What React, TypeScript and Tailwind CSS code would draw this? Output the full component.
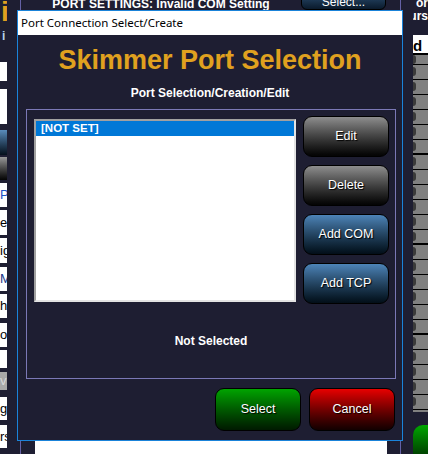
const leftItems = [
  { cls: 'mt-[14px] h-[19px] bg-white', text: '' },
  { cls: 'mt-[8px] h-[35px] bg-white', text: '' },
  { cls: 'mt-[6px] h-[25px] bg-linear-to-b from-[#5a8cbc] to-[#05101c]', text: '' },
  { cls: 'mt-[2px] h-[23px] bg-linear-to-b from-[#9a9a9a] to-[#050505]', text: '' },
  { cls: 'mt-[3px] h-[24px] bg-white', text: 'P', tone: 'text-[#1c52c4]', dot: true },
  { cls: 'mt-[3px] h-[25px] bg-white', text: 'er' },
  { cls: 'mt-[3px] h-[25px] bg-white', text: 'ig' },
  { cls: 'mt-[4px] h-[24px] bg-white', text: 'MP', tone: 'text-[#1a3a8a]' },
  { cls: 'mt-[3px] h-[24px] bg-white', text: 'h' },
  { cls: 'mt-[5px] h-[24px] bg-white', text: 'os' },
  { cls: 'mt-[3px] h-[18px] bg-white', text: '' },
  { cls: 'mt-[4px] h-[18px] bg-[#a9a9a9]', text: 'v', tone: 'text-[#d8d8d8]' },
  { cls: 'mt-[7px] h-[23px] bg-white', text: 'gs' },
  { cls: 'mt-[5px] h-[23px] bg-white', text: 'rs' },
];

const grid = [
  'h-[10px] border-b border-black',
  ...Array.from({ length: 24 }, (_, i) =>
    (i + 1) % 6 === 0 ? 'h-[15px] border-b-2 border-black' : 'h-[15px] border-b border-black'
  ),
];

function Btn({ label, tone, tall }: { label: string; tone: string; tall?: boolean }) {
  return (
    <button
      className={`w-[86px] ${tall ? 'h-[43px]' : 'h-[41px]'} rounded-[9px] border border-black bg-linear-to-b ${tone} text-white text-[12.5px] [text-shadow:1px_1px_1px_#000]`}
    >
      {label}
    </button>
  );
}

export default function App() {
  return (
    <div className="relative w-[428px] h-[454px] overflow-hidden bg-[#1e1e32] flex font-['Liberation_Sans',Arial,sans-serif]">
      {/* left edge of the app behind */}
      <div className="w-[7px] flex flex-col overflow-hidden">
        <div className="h-[24px] text-[28px] leading-[24px] font-bold text-[#e0a11f] pl-[1px]">i</div>
        <div className="h-[24px] text-[12px] leading-[24px] font-bold text-[#b9d2ea] pl-[2px]">i</div>
        {leftItems.map((it, i) => (
          <div
            key={i}
            className={`${it.cls} flex items-center overflow-hidden whitespace-nowrap text-[13px] ${it.tone ?? 'text-black'}`}
          >
            {it.text}
            {it.dot && <span className="ml-[2px] w-[3px] h-[10px] bg-[#e0a11f]" />}
          </div>
        ))}
      </div>
      <div className="w-[13px]" />

      {/* main panel behind */}
      <div className="w-[381px] border-x border-[#6461a6] flex flex-col">
        <div className="h-[10px] flex overflow-hidden">
          <div className="w-[280px] flex items-end justify-center">
            <span className="text-[12px] leading-[12px] font-bold text-white whitespace-nowrap">
              PORT SETTINGS: Invalid COM Setting
            </span>
          </div>
          <div className="w-[85px] h-[10px] flex items-end">
            <div className="w-[85px] h-[30px] shrink-0 rounded-b-[6px] border border-black bg-linear-to-b from-[#4a7eae] to-[#0a1a2c] flex items-end justify-center pb-[1px] text-[12px] leading-[12px] text-white">
              Select...
            </div>
          </div>
        </div>
        <div className="flex-1" />
        <div className="ml-[14px] w-[352px] h-[13px] bg-white" />
      </div>
      <div className="w-[12px]" />

      {/* right edge of the app behind */}
      <div className="w-[15px] flex flex-col overflow-hidden">
        <div className="h-[22px] -mt-[3px] flex flex-col items-end text-[12px] leading-[13px] font-bold text-white whitespace-nowrap">
          <span>or</span>
          <span>Hours</span>
        </div>
        <div className="mt-[16px] h-[20px] bg-white border-b-2 border-black flex items-end text-[15px] leading-[15px] font-bold text-black">
          d
        </div>
        <div className="h-[365px] bg-[#808080] overflow-hidden">
          {grid.map((c, i) => (
            <div key={i} className={`${c} flex items-center`}>
              <span className="w-[3px] h-[9px] rounded-r-full bg-[#3a3a3a]" />
            </div>
          ))}
        </div>
        <div className="mt-[13px] h-[30px] rounded-tl-[10px] bg-linear-to-b from-[#00a800] to-[#004400]" />
      </div>

      {/* dialog */}
      <div className="absolute left-[17px] top-[10px] w-[386px] h-[431px] border border-[#1a83d9] bg-[#1e1e32] flex flex-col">
        <div className="h-[24px] bg-white flex items-center pl-[3px] text-[11.5px] text-black font-['Noto_Sans',sans-serif]">
          Port Connection Select/Create
        </div>
        <h1 className="mt-[10px] text-center text-[27px] leading-[31px] font-bold text-[#e0a11f]">
          Skimmer Port Selection
        </h1>
        <p className="mt-[10px] text-center text-[12px] leading-[14px] font-bold text-white">
          Port Selection/Creation/Edit
        </p>
        <div className="mt-[9px] ml-[8px] w-[370px] h-[270px] border border-[#7b78b6] flex flex-col">
          <div className="flex items-start pl-[7px] pt-[6px] gap-[7px]">
            <div className="mt-[3px] w-[262px] h-[183px] bg-white border-2 border-t-[#a0a0a0] border-l-[#a0a0a0] border-b-[#e3e3e3] border-r-[#e3e3e3]">
              <div className="h-[15px] bg-[#0078d7] pl-[5px] text-[11.5px] leading-[15px] font-bold text-white">
                [NOT SET]
              </div>
            </div>
            <div className="flex flex-col gap-[8px]">
              <Btn label="Edit" tone="from-[#8e8e8e] to-[#040404]" />
              <Btn label="Delete" tone="from-[#8e8e8e] to-[#040404]" />
              <Btn label="Add COM" tone="from-[#4d84b8] to-[#030e18]" />
              <Btn label="Add TCP" tone="from-[#4d84b8] to-[#030e18]" />
            </div>
          </div>
          <p className="mt-[30px] text-center text-[12px] leading-[14px] font-bold text-white">Not Selected</p>
        </div>
        <div className="mt-[9px] flex justify-end gap-[8px] pr-[7px]">
          <Btn label="Select" tone="from-[#00a400] to-[#001a00]" tall />
          <Btn label="Cancel" tone="from-[#e80000] to-[#120000]" tall />
        </div>
      </div>
    </div>
  );
}
